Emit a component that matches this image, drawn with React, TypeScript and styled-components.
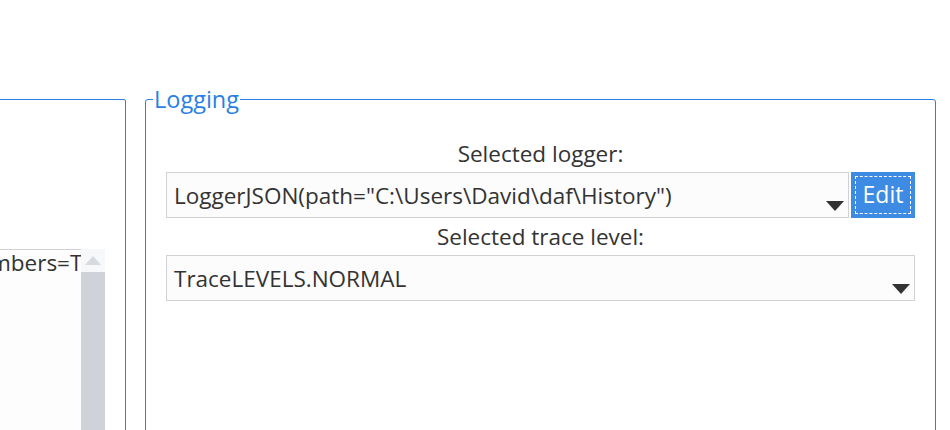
import React from "react";
import styled, { createGlobalStyle } from "styled-components";

const Global = createGlobalStyle`
  html, body { margin: 0; padding: 0; background: #ffffff; }
  body { font-family: "Open Sans", "Noto Sans", sans-serif; color: #333333; overflow: hidden; }
`;

const Page = styled.div`
  width: 950px;
  height: 430px;
  display: flex;
  align-items: flex-start;
  padding-top: 99px;
  box-sizing: border-box;
  overflow: hidden;
`;

const LeftPanel = styled.div`
  margin-left: -120px;
  width: 246px;
  height: 360px;
  flex: none;
  box-sizing: border-box;
  border: 1px solid #2b7fe3;
  border-radius: 2px;
  padding-top: 149px;
`;

const ListBox = styled.div`
  display: flex;
  width: 224px;
  height: 220px;
`;

const ListContent = styled.div`
  flex: 1;
  min-width: 0;
  overflow: hidden;
  white-space: nowrap;
  background: #fdfdfd;
  border: 1px solid #d0d1d5;
  border-right: none;
  font-size: 22.5px;
  line-height: 26px;
  display: flex;
  justify-content: flex-end;
  align-items: flex-start;
`;

const ListItem = styled.span`
  margin-right: -37px;
  flex: none;
`;

const ScrollBar = styled.div`
  width: 24px;
  flex: none;
  background: #cfd3d9;
  display: flex;
  flex-direction: column;
`;

const ScrollButton = styled.div`
  height: 23px;
  background: #f7f8f9;
  display: flex;
  align-items: center;
  justify-content: center;
`;

const FieldSet = styled.fieldset`
  margin: -13px 0 0 19px;
  width: 791px;
  height: 360px;
  flex: none;
  box-sizing: border-box;
  border: 1px solid #2b7fe3;
  border-radius: 3px;
  padding: 0 20px;
  min-width: 0;
`;

const Legend = styled.legend`
  color: #2b7fe3;
  font-size: 23.5px;
  line-height: 26px;
  padding: 0 1px;
  margin-left: -13px;
`;

const Label = styled.div`
  text-align: center;
  font-size: 22.5px;
  line-height: 37px;
`;

const FirstLabel = styled(Label)`
  margin-top: 23px;
`;

const Row = styled.div`
  display: flex;
  gap: 2px;
`;

const Select = styled.div`
  flex: 1;
  height: 46px;
  box-sizing: border-box;
  background: #fcfcfc;
  border: 1px solid #d0d1d5;
  display: flex;
  align-items: center;
  padding: 0 0 0 7px;
  position: relative;
  font-size: 22.5px;
  white-space: nowrap;
`;

const Arrow = styled.svg`
  position: absolute;
  right: 3px;
  bottom: 5px;
`;

const EditButton = styled.button`
  width: 64px;
  height: 46px;
  flex: none;
  box-sizing: border-box;
  background: #3d8be3;
  border: 1px solid #3d8be3;
  color: #ffffff;
  font-family: inherit;
  font-size: 23px;
  padding: 0 0 2px;
  outline: 1.5px dashed #ffffff;
  outline-offset: -5px;
`;

const DropArrow = () => (
  <Arrow width="20" height="11" viewBox="0 0 20 11">
    <polygon points="1,0 19,0 10,10" fill="#333333" />
  </Arrow>
);

export default function App() {
  return (
    <>
      <Global />
      <Page>
        <LeftPanel>
          <ListBox>
            <ListContent>
              <ListItem>show_line_numbers=True</ListItem>
            </ListContent>
            <ScrollBar>
              <ScrollButton>
                <svg width="16" height="9" viewBox="0 0 16 9">
                  <polygon points="0,9 16,9 8,0" fill="#d7dadf" />
                </svg>
              </ScrollButton>
            </ScrollBar>
          </ListBox>
        </LeftPanel>
        <FieldSet>
          <Legend>Logging</Legend>
          <FirstLabel>Selected logger:</FirstLabel>
          <Row>
            <Select>
              LoggerJSON(path="C:\Users\David\daf\History")
              <DropArrow />
            </Select>
            <EditButton>Edit</EditButton>
          </Row>
          <Label>Selected trace level:</Label>
          <Row>
            <Select>
              TraceLEVELS.NORMAL
              <DropArrow />
            </Select>
          </Row>
        </FieldSet>
      </Page>
    </>
  );
}
